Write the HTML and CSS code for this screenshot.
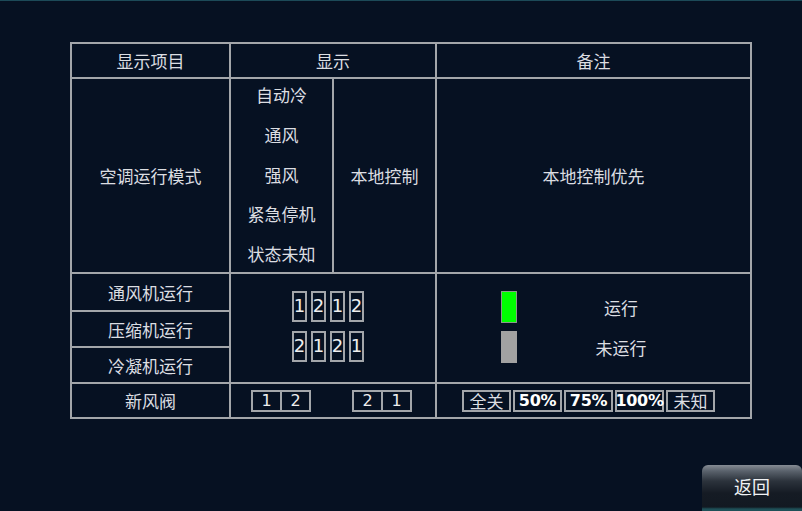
FILE: index.html
```html
<!DOCTYPE html>
<html lang="zh">
<head>
<meta charset="utf-8">
<title>显示项目</title>
<link rel="stylesheet" href="styles.css">
</head>
<body>
<div class="screen">
  <div class="table">
    <div class="cell head">显示项目</div>
    <div class="cell head span2">显示</div>
    <div class="cell head">备注</div>

    <div class="cell">空调运行模式</div>
    <div class="cell modes">
      <span>自动冷</span>
      <span>通风</span>
      <span>强风</span>
      <span>紧急停机</span>
      <span>状态未知</span>
    </div>
    <div class="cell">本地控制</div>
    <div class="cell">本地控制优先</div>

    <div class="cell r3">通风机运行</div>
    <div class="cell digits">
      <div class="digit-row">
        <span class="digit">1</span><span class="digit">2</span><span class="digit">1</span><span class="digit">2</span>
      </div>
      <div class="digit-row">
        <span class="digit">2</span><span class="digit">1</span><span class="digit">2</span><span class="digit">1</span>
      </div>
    </div>
    <div class="cell legend">
      <div class="legend-row">
        <span class="lamp on"></span><span class="legend-label">运行</span>
      </div>
      <div class="legend-row">
        <span class="lamp off"></span><span class="legend-label">未运行</span>
      </div>
    </div>
    <div class="cell r4">压缩机运行</div>
    <div class="cell r5">冷凝机运行</div>

    <div class="cell">新风阀</div>
    <div class="cell valves">
      <div class="pair"><span class="pv">1</span><span class="pv">2</span></div>
      <div class="pair"><span class="pv">2</span><span class="pv">1</span></div>
    </div>
    <div class="cell steps">
      <span class="step">全关</span>
      <span class="step num">50%</span>
      <span class="step num">75%</span>
      <span class="step num">100%</span>
      <span class="step">未知</span>
    </div>
  </div>
  <div class="footer">
    <button class="back">返回</button>
  </div>
</div>
</body>
</html>
```

FILE: styles.css
```css
html, body {
  margin: 0;
  padding: 0;
  height: 100%;
}
body {
  background: #061122;
  color: #dcdee2;
  font-family: "Noto Sans CJK SC", "DejaVu Sans", sans-serif;
  overflow: hidden;
}
.screen {
  height: 511px;
  display: flex;
  flex-direction: column;
  box-shadow: inset 0 1px 0 #1c4a58;
}
.table {
  margin: 42px 0 0 70px;
  width: 682px;
  padding: 2px;
  box-sizing: border-box;
  background: #a3a6aa;
  display: grid;
  grid-template-columns: 157px 101px 101px 313px;
  grid-template-rows: 33px 193px 36px 34px 34px 33px;
  gap: 2px;
}
.cell {
  background: #061122;
  display: flex;
  align-items: center;
  justify-content: center;
  font-size: 17px;
  line-height: 1;
  overflow: hidden;
}
.span2 { grid-column: span 2; }
.modes {
  flex-direction: column;
  justify-content: center;
  overflow: visible;
  padding-bottom: 2px;
  box-sizing: border-box;
}
.modes span {
  display: block;
  height: 39.8px;
  line-height: 39.8px;
  flex: none;
}
.r3 { grid-column: 1; grid-row: 3; }
.r4 { grid-column: 1; grid-row: 4; }
.r5 { grid-column: 1; grid-row: 5; }
.digits {
  grid-column: 2 / span 2;
  grid-row: 3 / span 3;
  flex-direction: column;
  align-items: flex-start;
  padding-left: 61px;
  padding-bottom: 4px;
  box-sizing: border-box;
  gap: 9px;
}
.digit-row {
  display: flex;
  gap: 4px;
}
.digit {
  width: 15px;
  height: 31px;
  box-sizing: border-box;
  border: 2px solid #a3a6aa;
  display: flex;
  align-items: center;
  justify-content: center;
  font-family: "DejaVu Sans", sans-serif;
  font-size: 18px;
  color: #eeeeee;
}
.legend {
  grid-column: 4;
  grid-row: 3 / span 3;
  flex-direction: column;
  align-items: flex-start;
  padding-left: 64px;
  padding-bottom: 2px;
  box-sizing: border-box;
  gap: 8px;
}
.legend-row {
  display: flex;
  align-items: center;
  gap: 44px;
}
.lamp {
  width: 16px;
  height: 32px;
  box-sizing: border-box;
}
.lamp.on {
  background: #00ff00;
  border: 1px solid #8a9a8a;
}
.lamp.off {
  background: #a2a2a2;
}
.legend-label {
  width: 120px;
  text-align: center;
  font-size: 17px;
}
.valves {
  grid-column: 2 / span 2;
  justify-content: flex-start;
  padding-left: 20px;
  gap: 41px;
}
.pair {
  display: flex;
  height: 22px;
  box-sizing: border-box;
  border: 2px solid #a3a6aa;
}
.pv {
  width: 27px;
  display: flex;
  align-items: center;
  justify-content: center;
  font-family: "DejaVu Sans", sans-serif;
  font-size: 16px;
  color: #eeeeee;
}
.pv + .pv {
  border-left: 2px solid #a3a6aa;
}
.steps {
  justify-content: flex-start;
  padding-left: 25px;
  gap: 2px;
}
.step {
  width: 49px;
  height: 22px;
  box-sizing: border-box;
  border: 2px solid #a3a6aa;
  display: flex;
  align-items: center;
  justify-content: center;
  font-size: 17px;
  white-space: nowrap;
}
.step.num {
  font-family: "DejaVu Sans", sans-serif;
  font-weight: bold;
  font-size: 16px;
  color: #ffffff;
  letter-spacing: -0.3px;
}
.footer {
  margin-top: auto;
  display: flex;
  justify-content: flex-end;
}
.back {
  width: 100px;
  height: 46px;
  border: none;
  border-radius: 6px 6px 0 0;
  background: linear-gradient(to bottom, #868c94 0px, #5a626c 6px, #2c333c 16px, #151b24 28px, #121922 42px, #1e5058 44px, #1e5058 46px);
  color: #f0f2f4;
  font-family: "Noto Sans CJK SC", sans-serif;
  font-size: 18px;
  padding: 0 0 4px 0;
  cursor: pointer;
}
```
